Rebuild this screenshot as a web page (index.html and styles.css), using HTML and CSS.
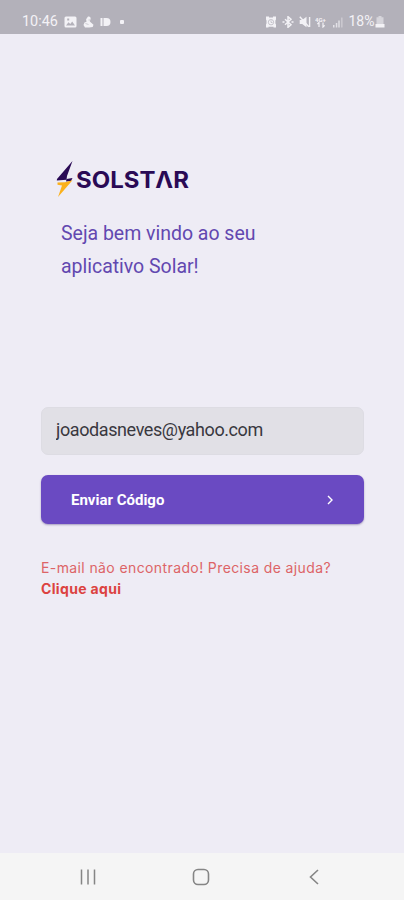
FILE: index.html
```html
<!DOCTYPE html>
<html lang="pt-BR">
<head>
    <meta charset="UTF-8">
    <meta name="viewport" content="width=device-width, initial-scale=1.0">
    <title>Solstar</title>
    <link rel="stylesheet" href="styles.css">
</head>
<body>
    <header class="status-bar">
        <div class="status-left">
            <span class="clock">10:46</span>
            <svg class="icon-image" width="13" height="12" viewBox="0 0 13 12">
                <path fill="currentColor" fill-rule="evenodd" d="M2 .5h9a1.500 1.500 0 0 1 1.500 1.500v8a1.500 1.500 0 0 1-1.500 1.500H2A1.500 1.500 0 0 1 .5 10V2A1.500 1.500 0 0 1 2 .5zM2 9.500h9L8.200 5.500 6.300 8 4.500 6.300zM3.200 2.500v2h2v-2z"/>
            </svg>
            <svg class="icon-person" width="11" height="12" viewBox="0 0 11 12">
                <path fill="currentColor" d="M5 .5c2-.4 3 1 2.600 2.600L6.800 5.500l3.700 3.200-.8 2.200-3.500.6H2L.5 9l1-2.500 2-.8-.4-2.400z"/>
                <path stroke="#b3b1ba" stroke-width=".6" d="M2.500 7.500l3 1M5.500 4h1.500"/>
            </svg>
            <svg class="icon-pill" width="11" height="10" viewBox="0 0 11 10">
                <path fill="currentColor" d="M.5 1H2.500v8H.5zM3.500 1h3a4 4 0 0 1 0 8h-3z"/>
            </svg>
            <span class="dot"></span>
        </div>
        <div class="status-right">
            <svg width="12" height="12" viewBox="0 0 12 12">
                <path fill="currentColor" d="M1 .5h3v1h4v-1h3v3l-.6 1v3L11 8.500v3H8.500v-.7h-5v.7H1v-3l.5-1v-3L1 3.500z"/>
                <circle cx="6" cy="6.200" r="2.700" fill="none" stroke="#b3b1ba" stroke-width=".7"/>
                <path stroke="#b3b1ba" fill="none" stroke-width=".7" d="M6 4.500v2h1.500"/>
            </svg>
            <svg width="12" height="12" viewBox="0 0 12 12">
                <path fill="none" stroke="currentColor" stroke-width="1.500" d="M3 3.300l6 5.400L6 11.300V.7l3 2.600-6 5.400"/>
                <path fill="currentColor" d="M.5 5.200h2v1.600h-2zM9.500 5.200h2v1.600h-2z"/>
            </svg>
            <svg width="12" height="12" viewBox="0 0 12 12">
                <path fill="currentColor" d="M.7 4h2.500L7.500.8v10.400L3.200 8H.7z"/>
                <path fill="none" stroke="currentColor" stroke-width="1.400" d="M.8.8l9 10M10.600 1v10"/>
            </svg>
            <svg width="12" height="12" viewBox="0 0 12 12">
                <text x="0" y="5.500" class="net-label">4G+</text>
                <path fill="none" stroke="currentColor" stroke-width="1.200" d="M4 11V6.500L2.300 8.200M8 6.500V11l1.700-1.700"/>
            </svg>
            <svg width="12" height="12" viewBox="0 0 12 12">
                <path fill="currentColor" opacity=".75" d="M1 9h1.500v2.500H1zM3.800 7h1.500v4.500H3.800z"/>
                <path fill="currentColor" opacity=".9" d="M6.400 4.500h1.200v7H6.400z"/>
                <path fill="currentColor" opacity=".45" d="M9.200 1.500h1.300v10H9.200z"/>
            </svg>
            <span class="battery-text">18%</span>
            <svg class="icon-battery" width="10" height="12" viewBox="0 0 10 12">
                <path fill="currentColor" opacity=".55" d="M3.500 0h3v1.200h2V8h-7V1.200h2z"/>
                <path fill="currentColor" d="M.5 8h9v3.500h-9z"/>
            </svg>
        </div>
    </header>

    <main class="login">
        <svg class="logo" width="134" height="38" viewBox="0 0 134 38" role="img" aria-label="Solstar">
            <path fill="#2a0a55" d="M16.500 0L1 18l-.2 1.500 9.700-.8L11 15z"/>
            <path fill="#2a0a55" d="M10.500 18l6-1-1.500 3-5 .5z"/>
            <path fill="#fbb11c" d="M1.500 21.500l7.500-.3 7.500-2L2 36l4-11.500-4.500-.7z"/>
            <text class="logo-text" x="20" y="27" textLength="113" lengthAdjust="spacingAndGlyphs">SOLSTΛR</text>
        </svg>

        <p class="welcome">Seja bem vindo ao seu<br>aplicativo Solar!</p>

        <form class="login-form">
            <input class="email" type="text" value="joaodasneves@yahoo.com" aria-label="E-mail">
            <button class="send-button" type="button">
                <span class="send-label">Enviar Código</span>
                <svg width="8" height="10" viewBox="0 0 8 10">
                    <path fill="none" stroke="currentColor" stroke-width="1.400" d="M2 1l4 4-4 4"/>
                </svg>
            </button>
        </form>

        <p class="error"><span class="error-text">E-mail não encontrado! Precisa de ajuda?</span><br><a class="help-link">Clique aqui</a></p>
    </main>

    <nav class="nav-bar">
        <svg width="18" height="18" viewBox="0 0 18 18">
            <path fill="none" stroke="currentColor" stroke-width="1.500" d="M2.500 1.500v15M9 1.500v15M15.500 1.500v15"/>
        </svg>
        <svg width="18" height="18" viewBox="0 0 18 18">
            <rect x="1.500" y="1.500" width="15" height="15" rx="4.500" fill="none" stroke="currentColor" stroke-width="1.600"/>
        </svg>
        <svg width="18" height="18" viewBox="0 0 18 18">
            <path fill="none" stroke="currentColor" stroke-width="1.600" d="M13 2L5.500 9l7.500 7"/>
        </svg>
    </nav>
</body>
</html>
```

FILE: styles.css
```css
* {
    box-sizing: border-box;
}
body {
    margin: 0;
    height: 900px;
    display: flex;
    flex-direction: column;
    background-color: #eeecf5;
    font-family: Roboto, sans-serif;
}
.status-bar {
    height: 34px;
    padding: 9px 19px 0 22px;
    display: flex;
    justify-content: space-between;
    background-color: #b3b1ba;
    color: #f3f2f6;
}
.status-left,
.status-right {
    height: 25px;
    display: flex;
    align-items: center;
}
.clock {
    width: 36px;
    font-size: 14.4px;
    line-height: 25px;
}
.icon-image {
    margin-left: 6px;
}
.icon-person {
    margin-left: 6px;
}
.icon-pill {
    margin-left: 6px;
}
.dot {
    width: 4px;
    height: 4px;
    margin-left: 9px;
    border-radius: 1px;
    background-color: #f3f2f6;
}
.status-right {
    gap: 4.6px;
}
.net-label {
    font-size: 6px;
    font-weight: bold;
    fill: currentColor;
}
.battery-text {
    font-size: 14px;
    line-height: 25px;
}
.icon-battery {
    margin-left: -4px;
}
.login {
    flex: 1;
    padding: 127px 40px 0 41px;
}
.logo {
    display: block;
    margin-left: 15px;
}
.logo-text {
    font-family: Inter, sans-serif;
    font-size: 23px;
    font-weight: 700;
    fill: #2a0a55;
}
.welcome {
    margin: 18px 0 0 20px;
    font-size: 19.5px;
    line-height: 33px;
    letter-spacing: -0.02px;
    color: #6248b0;
}
.login-form {
    margin-top: 124px;
    display: flex;
    flex-direction: column;
    gap: 20px;
}
.email {
    width: 100%;
    height: 48px;
    padding: 0 14px 3px;
    border: 1px solid #dddce3;
    border-radius: 7px;
    background-color: #e1e0e6;
    font-family: Roboto, sans-serif;
    font-size: 18px;
    letter-spacing: -0.4px;
    color: #39383f;
}
.send-button {
    height: 49px;
    padding: 0 30px;
    display: flex;
    align-items: center;
    justify-content: space-between;
    border: none;
    border-radius: 7px;
    background-color: #6a4ac2;
    box-shadow: 0 1px 2px rgba(60, 40, 110, 0.4);
    color: #fff;
}
.send-label {
    font-family: Roboto, sans-serif;
    font-size: 15px;
    font-weight: 700;
}
.error {
    margin: 33px 0 0;
    font-family: Inter, sans-serif;
    font-size: 14px;
    line-height: 21px;
    color: #dd6467;
    white-space: nowrap;
}
.error-text {
    letter-spacing: 0.39px;
}
.help-link {
    font-weight: 700;
    letter-spacing: 0.35px;
    color: #dc4240;
}
.nav-bar {
    height: 47px;
    padding: 0 81px 0 79px;
    display: flex;
    align-items: center;
    justify-content: space-between;
    background-color: #f5f5f5;
    color: #858585;
}
```
